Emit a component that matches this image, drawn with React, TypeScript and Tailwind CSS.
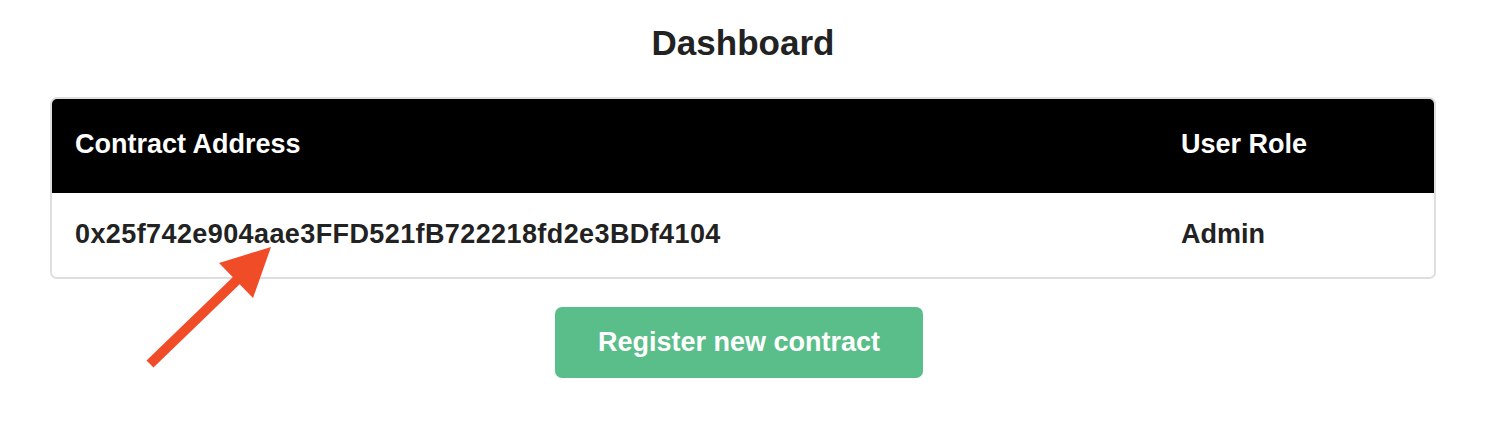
import React from 'react';

interface ContractRow {
  address: string;
  role: string;
}

const rows: ContractRow[] = [
  { address: '0x25f742e904aae3FFD521fB722218fd2e3BDf4104', role: 'Admin' },
];

const Arrow: React.FC = () => (
  <svg
    className="absolute left-[140px] top-[240px] pointer-events-none"
    width="140"
    height="135"
    viewBox="140 240 140 135"
  >
    <line x1="150" y1="364" x2="238" y2="279" stroke="#f04c28" strokeWidth="10" />
    <polygon points="271,247 219,263 253,298" fill="#f04c28" />
  </svg>
);

const App: React.FC = () => {
  return (
    <div
      className="relative min-h-screen bg-white pl-[50px] pr-[55px] pt-[23px]"
      style={{ fontFamily: '"Liberation Sans", Arial, sans-serif' }}
    >
      <h1 className="text-center text-[35px] leading-[40px] font-bold text-[#222]">Dashboard</h1>

      <div className="mt-[34px] border-2 border-[#dedede] rounded-[7px] overflow-hidden">
        <div className="flex items-center h-[94px] pb-[4px] bg-black text-white text-[27px] font-bold pl-[23px]">
          <div className="w-[1106px]">Contract Address</div>
          <div>User Role</div>
        </div>
        {rows.map((row) => (
          <div
            key={row.address}
            className="flex items-center h-[84px] pb-[2px] bg-white text-[#222] text-[27px] font-bold pl-[23px]"
          >
            <div className="w-[1106px] tracking-[0.4px]">{row.address}</div>
            <div>{row.role}</div>
          </div>
        ))}
      </div>

      <div className="flex justify-center mt-[28px] pr-[8px]">
        <button
          type="button"
          className="w-[368px] h-[71px] rounded-[7px] bg-[#5abe8a] text-white text-[27px] font-bold"
        >
          Register new contract
        </button>
      </div>

      <Arrow />
    </div>
  );
};

export default App;
